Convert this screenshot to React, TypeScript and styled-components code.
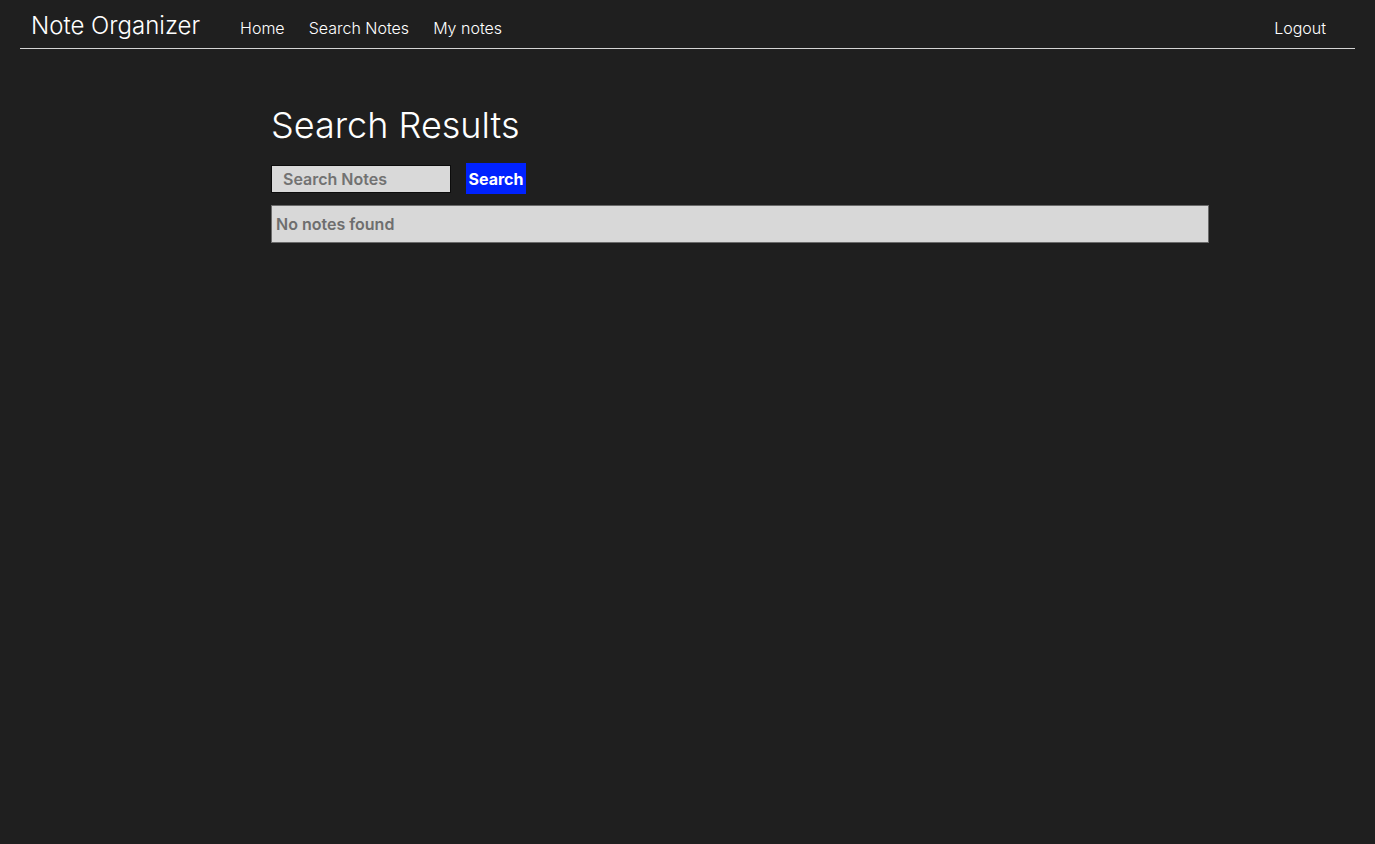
import React from "react"
import styled, { createGlobalStyle } from "styled-components"

const GlobalStyle = createGlobalStyle`
  html, body {
    margin: 0;
    padding: 0;
    background-color: #1f1f1f;
    font-family: Inter, "Liberation Sans", sans-serif;
    color: #ffffff;
  }
  #root {
    min-height: 100vh;
  }
`

const Nav = styled.nav`
  display: flex;
  flex-direction: row;
  align-items: baseline;
  height: 49px;
  box-sizing: border-box;
  margin: 0 20px;
  padding: 11px 29px 0 11px;
  border-bottom: 1px solid #d4d4d4;
`

const Brand = styled.a`
  font-size: 24px;
  font-weight: 300;
  color: #ffffff;
  text-decoration: none;
  margin-right: 40px;
`

const NavLinks = styled.div`
  display: flex;
  flex-direction: row;
  gap: 24px;
  flex: 1;
`

const NavLink = styled.a`
  font-size: 16px;
  font-weight: 300;
  color: #ffffff;
  text-decoration: none;
`

const Main = styled.main`
  width: 938px;
  margin-left: 271px;
  padding-top: 54px;
`

const Title = styled.h1`
  margin: 0 0 16px;
  font-size: 36px;
  font-weight: 300;
  line-height: 44px;
`

const SearchRow = styled.form`
  display: flex;
  flex-direction: row;
  align-items: center;
  gap: 15px;
  margin-bottom: 11px;
`

const SearchInput = styled.input`
  width: 180px;
  height: 28px;
  box-sizing: border-box;
  border: 1px solid #0c0c0c;
  background: #d9d9d9;
  padding: 0 11px;
  font-family: Inter, "Liberation Sans", sans-serif;
  font-size: 16px;
  font-weight: 600;
  color: #555;
  outline: none;

  &::placeholder {
    color: #727272;
  }
`

const SearchButton = styled.button`
  height: 31px;
  width: 60px;
  padding: 0;
  border: none;
  background: #0022ff;
  color: #ffffff;
  font-family: Inter, "Liberation Sans", sans-serif;
  font-size: 16px;
  font-weight: 700;
  cursor: pointer;
`

const EmptyBox = styled.div`
  height: 38px;
  box-sizing: border-box;
  display: flex;
  align-items: center;
  padding: 0 4px;
  background: #d8d8d8;
  border: 1px solid #6a6a6a;
  color: #6e6e6e;
  font-size: 16px;
  font-weight: 600;
`

function App() {
  return (
    <>
      <GlobalStyle />
      <Nav>
        <Brand href="#">Note Organizer</Brand>
        <NavLinks>
          <NavLink href="#">Home</NavLink>
          <NavLink href="#">Search Notes</NavLink>
          <NavLink href="#">My notes</NavLink>
        </NavLinks>
        <NavLink href="#">Logout</NavLink>
      </Nav>
      <Main>
        <Title>Search Results</Title>
        <SearchRow onSubmit={(e) => e.preventDefault()}>
          <SearchInput placeholder="Search Notes" />
          <SearchButton type="submit">Search</SearchButton>
        </SearchRow>
        <EmptyBox>No notes found</EmptyBox>
      </Main>
    </>
  )
}

export default App
